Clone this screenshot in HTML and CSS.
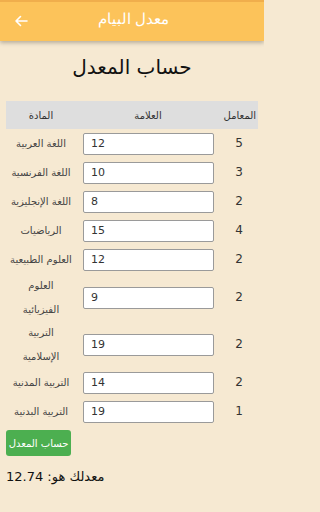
FILE: index.html
```html
<!DOCTYPE html>
<html lang="ar">
<head>
<meta charset="utf-8">
<link rel="stylesheet" href="styles.css">
</head>
<body>
<header class="appbar">
  <svg class="back" width="14" height="12" viewBox="0 0 14 12"><path d="M13 6H2M6.5 1.5L2 6l4.5 4.5" fill="none" stroke="#fff" stroke-width="1.6" stroke-linecap="round" stroke-linejoin="round"/></svg>
  <div class="appbar-title">معدل البيام</div>
</header>
<main class="content">
  <h1 class="title">حساب المعدل</h1>
  <table class="grid">
    <thead>
      <tr><th class="c-sub">المادة</th><th class="c-mark">العلامة</th><th class="c-coef">المعامل</th></tr>
    </thead>
    <tbody>
      <tr><td class="c-sub">اللغة العربية</td><td class="c-mark"><div class="field">12</div></td><td class="c-coef">5</td></tr>
      <tr><td class="c-sub">اللغة الفرنسية</td><td class="c-mark"><div class="field">10</div></td><td class="c-coef">3</td></tr>
      <tr><td class="c-sub">اللغة الإنجليزية</td><td class="c-mark"><div class="field">8</div></td><td class="c-coef">2</td></tr>
      <tr><td class="c-sub">الرياضيات</td><td class="c-mark"><div class="field">15</div></td><td class="c-coef">4</td></tr>
      <tr><td class="c-sub">العلوم الطبيعية</td><td class="c-mark"><div class="field">12</div></td><td class="c-coef">2</td></tr>
      <tr><td class="c-sub">العلوم<br>الفيزيائية</td><td class="c-mark"><div class="field">9</div></td><td class="c-coef">2</td></tr>
      <tr><td class="c-sub">التربية<br>الإسلامية</td><td class="c-mark"><div class="field">19</div></td><td class="c-coef">2</td></tr>
      <tr><td class="c-sub">التربية المدنية</td><td class="c-mark"><div class="field">14</div></td><td class="c-coef">2</td></tr>
      <tr><td class="c-sub">التربية البدنية</td><td class="c-mark"><div class="field">19</div></td><td class="c-coef">1</td></tr>
    </tbody>
  </table>
  <button class="calc">حساب المعدل</button>
  <p class="result">معدلك هو: 12.74</p>
</main>
</body>
</html>
```
FILE: styles.css
```css
* { box-sizing: border-box; }
html, body { margin: 0; padding: 0; }
body {
  background: #f6e9d2;
  font-family: "DejaVu Sans", "Noto Sans", sans-serif;
  color: #222;
  width: 264px;
  height: 512px;
  overflow: hidden;
}
.appbar {
  height: 41px;
  background: #fcc35a;
  border-top: 2px solid #f0ae4c;
  box-shadow: 0 2px 4px rgba(0,0,0,0.25);
  display: flex;
  align-items: center;
  position: relative;
}
.back { margin-left: 14px; margin-top: -2px; }
.appbar-title {
  position: absolute;
  left: 0; right: 0;
  top: 8px;
  text-align: center;
  color: #fff;
  font-size: 15px;
  font-weight: 300;
  padding-left: 3px;
}
.content { padding: 0 6px; }
.title {
  margin: 13px 0 0;
  height: 47px;
  text-align: center;
  font-size: 20px;
  font-weight: normal;
  color: #111;
  line-height: 26px;
}
.grid {
  width: 252px;
  border-collapse: collapse;
}
.grid th {
  background: #dedede;
  font-weight: normal;
  font-size: 10px;
  color: #333;
  height: 28px;
  padding: 0;
}
.grid td {
  padding: 0;
  font-size: 10px;
  color: #444;
  line-height: 23.5px;
  text-align: center;
}
.c-sub { width: 70px; }
.c-mark { width: 144px; }
.c-coef { width: 38px; }
.grid th.c-coef { text-align: right; padding-right: 2px; }
.grid td.c-coef { font-size: 12px; color: #333; }
.field {
  width: 131px;
  height: 22px;
  margin: 3.5px 0 3.5px 7px;
  background: #fff;
  border: 1px solid #9a9a9a;
  border-radius: 2px;
  text-align: left;
  padding-left: 7px;
  font-size: 11px;
  line-height: 20px;
  color: #333;
}
.calc {
  display: block;
  margin-top: 4px;
  width: 65px;
  height: 26px;
  background: #4caf50;
  border: none;
  border-radius: 3px;
  color: #fff;
  font-family: "DejaVu Sans", sans-serif;
  font-size: 10px;
  white-space: nowrap;
  padding: 0;
}
.result {
  margin: 13px 0 0;
  font-size: 13px;
  color: #111;
}
```
